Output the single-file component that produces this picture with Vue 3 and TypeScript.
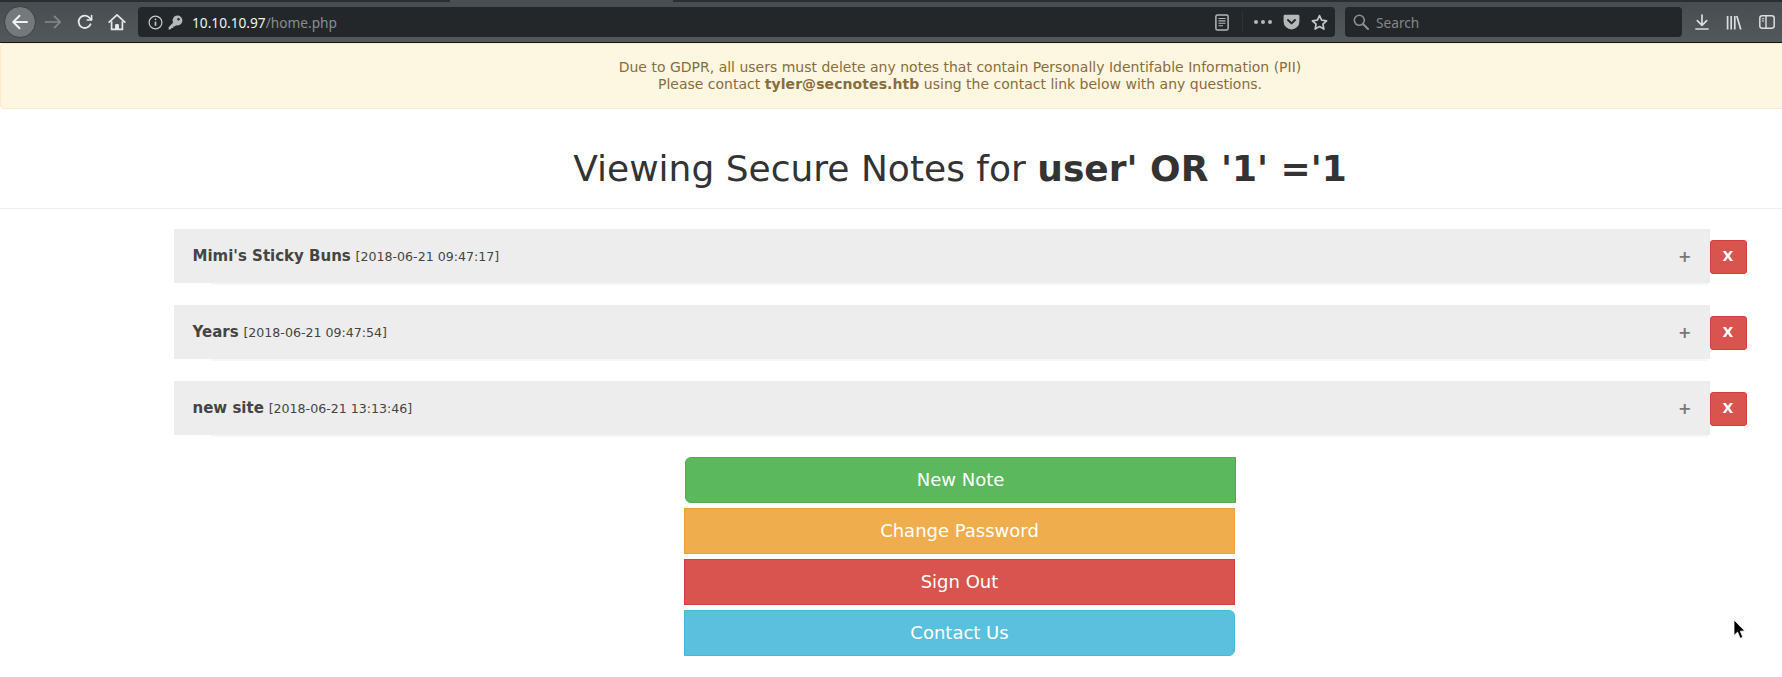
<script setup lang="ts">
const notes = [
  { title: "Mimi's Sticky Buns", date: '[2018-06-21 09:47:17]' },
  { title: 'Years', date: '[2018-06-21 09:47:54]' },
  { title: 'new site', date: '[2018-06-21 13:13:46]' },
];

const actions = [
  { label: 'New Note', cls: 'green' },
  { label: 'Change Password', cls: 'orange' },
  { label: 'Sign Out', cls: 'red' },
  { label: 'Contact Us', cls: 'blue' },
];
</script>

<template>
  <div class="shot">
    <div class="browser-bar">
      <div class="tab-strip">
        <div class="tab-active"></div>
      </div>
      <div class="toolbar">
        <div class="back-btn">
          <svg width="20" height="20" viewBox="0 0 20 20" fill="none" stroke="#f0f1f1" stroke-width="2" stroke-linecap="round" stroke-linejoin="round"><path d="M17 10H3.5M9.5 3.8 3.3 10l6.2 6.2" /></svg>
        </div>
        <div class="nav-icon fwd">
          <svg width="18" height="18" viewBox="0 0 18 18" fill="none" stroke="#85898b" stroke-width="1.7" stroke-linecap="round" stroke-linejoin="round"><path d="M1.5 9h14.500M10.500 3.300 16.200 9l-5.700 5.700" /></svg>
        </div>
        <div class="nav-icon reload">
          <svg width="16" height="16" viewBox="0 0 16 16" fill="none" stroke="#e8e9e9" stroke-width="1.8" stroke-linecap="round"><path d="M13.500 10.300A6.200 6.200 0 1 1 12.600 3.800L14.400 5.600" /><path d="M14.600 1.600v4.400h-4.400" stroke-linejoin="round" stroke-width="1.600" /></svg>
        </div>
        <div class="nav-icon home">
          <svg width="18" height="18" viewBox="0 0 18 18" fill="none" stroke="#e8e9e9" stroke-width="1.7" stroke-linejoin="round"><path d="M1.200 9.200 9 1.800l7.800 7.400" stroke-linecap="round" /><path d="M3.600 8.200v8.200h10.800V8.200" /><path d="M7.600 16.400v-4.800h2.800v4.800" fill="#e8e9e9" stroke-width="1" /></svg>
        </div>
        <div class="url-bar">
          <svg class="info" width="15" height="15" viewBox="0 0 15 15" fill="none" stroke="#c9caca" stroke-width="1.2"><circle cx="7.500" cy="7.500" r="6.400" /><path d="M7.500 6.600v4.200" stroke-width="1.600" /><circle cx="7.500" cy="4.300" r=".9" fill="#c9caca" stroke="none" /></svg>
          <svg class="key" width="15" height="15" viewBox="0 0 15 15" fill="#b5b7b8"><path d="M9.500.6a4.900 4.900 0 0 1 0 9.800c-.5 0-1-.1-1.400-.2L6.700 11.600H5.200v1.500H3.700L2.400 14.400H.6v-2.200L5 7.800A4.900 4.900 0 0 1 9.500.6Zm1 2.300a1.300 1.300 0 1 0 0 2.600 1.300 1.300 0 0 0 0-2.600Z" /></svg>
          <span class="url-text">10.10.10.97<span class="url-path">/home.php</span></span>
          <svg class="reader" width="14" height="17" viewBox="0 0 14 17" fill="none" stroke="#b5b7b8"><rect x=".9" y=".9" width="12.200" height="15.200" rx="1.600" stroke-width="1.500" /><path d="M3.500 4.500h7M3.500 6.900h7M3.500 9.300h7M3.500 11.700h4.500" stroke-width="1.100" /></svg>
          <div class="url-sep"></div>
          <div class="dots"><i></i><i></i><i></i></div>
          <svg class="pocket" width="17" height="16" viewBox="0 0 17 16"><path d="M2 .8h13c.8 0 1.400.6 1.400 1.400v5.300a7.900 7.900 0 0 1-15.800 0V2.200C.6 1.400 1.200.8 2 .8Z" fill="#b5b7b8" /><path d="m5 6 3.500 3.400L12 6" fill="none" stroke="#232729" stroke-width="2" stroke-linecap="round" stroke-linejoin="round" /></svg>
          <svg class="star" width="17" height="17" viewBox="0 0 17 17" fill="none" stroke="#c4c5c6" stroke-width="1.700" stroke-linejoin="round"><path d="m8.500 1.600 2.100 4.600 5 .6-3.700 3.400 1 4.900-4.400-2.500-4.400 2.500 1-4.900-3.700-3.400 5-.6Z" /></svg>
        </div>
        <div class="search-bar">
          <svg width="16" height="16" viewBox="0 0 16 16" fill="none" stroke="#8d9091" stroke-width="1.600" stroke-linecap="round"><circle cx="6.300" cy="6.300" r="5" /><path d="m10 10 5 5" stroke-width="2" /></svg>
          <span>Search</span>
        </div>
        <div class="right-icons">
          <svg width="14" height="16" viewBox="0 0 14 16" fill="none" stroke="#dcdddd" stroke-width="1.700" stroke-linecap="round" stroke-linejoin="round"><path d="M7 1v10M2.300 6.600 7 11.300l4.700-4.700M1 15h12" /></svg>
          <svg width="16" height="15" viewBox="0 0 16 15" fill="none" stroke="#dcdddd" stroke-width="1.700"><path d="M1.600 1v13.500M5.200 1v13.500M8.800 1v13.500M10.800 1l4 13.500" /></svg>
          <svg width="16" height="14" viewBox="0 0 16 14" fill="none" stroke="#dcdddd"><rect x=".8" y=".8" width="14.400" height="12.400" rx="2.400" stroke-width="1.500" /><path d="M7 1v12" stroke-width="1.400" /><path d="M2.800 3.800h2.400M2.800 6h2.400" stroke-width="1.100" /></svg>
        </div>
      </div>
    </div>

    <div class="page">
      <div class="alert">
        Due to GDPR, all users must delete any notes that contain Personally Identifable Information (PII)<br />
        Please contact <strong>tyler@secnotes.htb</strong> using the contact link below with any questions.
      </div>

      <h1 class="heading">Viewing Secure Notes for <strong>user' OR '1' ='1</strong></h1>

      <div class="notes">
        <div v-for="note in notes" :key="note.title" class="note-row">
          <div class="note">
            <div class="note-head">
              <span class="note-title"><strong>{{ note.title }}</strong> <small>{{ note.date }}</small></span>
              <span class="plus">+</span>
            </div>
          </div>
          <button class="del-btn">X</button>
        </div>
      </div>

      <div class="actions">
        <button v-for="a in actions" :key="a.label" class="act-btn" :class="a.cls">{{ a.label }}</button>
      </div>
    </div>

    <svg class="cursor" width="13" height="21" viewBox="0 0 13 21"><path d="M1 1v15.500l3.600-3.400 2.500 6.200 2.700-1.100-2.500-6 4.500-.2Z" fill="#000" stroke="#fff" stroke-width=".8" /></svg>
  </div>
</template>

<style>
html,
body {
  margin: 0;
  background: #fff;
  overflow: hidden;
}
</style>

<style scoped>
.shot {
  position: relative;
  width: 1782px;
  height: 677px;
  overflow: hidden;
  font-family: "DejaVu Sans", sans-serif;
  color: #333;
  background: #fff;
}

.browser-bar {
  height: 43px;
  background: linear-gradient(#474c50, #53585b);
  border-bottom: 1px solid #16181a;
  box-sizing: border-box;
}

.tab-strip {
  height: 2px;
  background: #2b2e31;
  display: flex;
}

.tab-active {
  margin-left: 450px;
  width: 223px;
  background: #4a4f52;
}

.toolbar {
  height: 40px;
  display: flex;
  align-items: center;
  padding-left: 4px;
}

.back-btn {
  width: 32px;
  height: 32px;
  box-sizing: border-box;
  border: 1px solid #3d4144;
  border-radius: 50%;
  background: #75797b;
  display: flex;
  align-items: center;
  justify-content: center;
}

.nav-icon {
  width: 32px;
  display: flex;
  justify-content: center;
}

.fwd {
  margin-left: 1px;
}

.url-bar {
  margin-left: 5px;
  width: 1197px;
  height: 30px;
  background: #232729;
  border-radius: 4px;
  display: flex;
  align-items: center;
  box-sizing: border-box;
  padding-left: 10px;
}

.key {
  margin-left: 5px;
}

.url-text {
  margin-left: 9px;
  font-family: "Noto Sans", sans-serif;
  font-size: 13.7px;
  color: #f1f2f2;
  flex: 1;
}

.url-path {
  color: #8a8d8f;
}

.url-sep {
  width: 1px;
  height: 20px;
  background: #2f3335;
  margin: 0 11px 0 13px;
}

.dots {
  display: flex;
  gap: 3px;
}

.dots i {
  width: 4px;
  height: 4px;
  border-radius: 50%;
  background: #b5b7b8;
}

.pocket {
  margin-left: 11px;
}

.star {
  margin: 0 7px 0 11px;
}

.search-bar {
  margin-left: 10px;
  width: 337px;
  height: 30px;
  background: #232729;
  border-radius: 4px;
  display: flex;
  align-items: center;
  gap: 7px;
  box-sizing: border-box;
  padding-left: 8px;
  font-family: "Noto Sans", sans-serif;
  font-size: 13.7px;
  color: #85888a;
}

.right-icons {
  margin-left: 13px;
  display: flex;
  align-items: center;
  gap: 17px;
}

.page {
  width: 1920px;
}

.alert {
  box-sizing: border-box;
  height: 66px;
  padding: 15px;
  background: #fdf7e2;
  border: 1px solid #faebcc;
  border-radius: 4px;
  text-align: center;
  font-size: 14px;
  line-height: 17px;
  color: #8a6d3b;
}

.alert strong {
  letter-spacing: 0.08px;
}

.heading {
  margin: 0;
  height: 100px;
  box-sizing: border-box;
  padding-top: 39px;
  text-align: center;
  font-size: 36px;
  line-height: 42px;
  font-weight: 400;
  border-bottom: 1px solid #eee;
}

.notes {
  width: 1573px;
  margin: 20px auto 0;
  display: flex;
  flex-direction: column;
  gap: 22px;
}

.note-row {
  display: flex;
  align-items: center;
}

.note {
  flex: 1;
  height: 54px;
}

/* faint line peeking out under each panel */
.note::after {
  content: "";
  display: block;
  height: 2px;
  margin: 0 2px 0 37px;
  background: #f7f7f7;
}

.note-head {
  height: 100%;
  display: flex;
  align-items: center;
  justify-content: space-between;
  padding: 0 18px 0 19px;
  background: #ededed;
  color: #444;
}

.note-title {
  font-size: 15px;
}

.note-title small {
  font-size: 12.6px;
}

.plus {
  font-size: 16px;
  font-weight: 700;
  color: #777;
}

.del-btn {
  width: 37px;
  height: 34px;
  margin-top: 2px;
  padding: 0 0 2px;
  border: 1px solid #d43f3a;
  border-radius: 3px;
  background: #d9534f;
  color: #fff;
  font-family: inherit;
  font-weight: 700;
  font-size: 14px;
}

.actions {
  margin-top: 22px;
  display: flex;
  flex-direction: column;
  align-items: center;
  gap: 5px;
}

.act-btn {
  width: 551px;
  height: 46px;
  border: 1px solid;
  margin-right: 1px;
  padding: 0 0 2px;
  color: #fff;
  font-family: inherit;
  font-size: 18px;
}

.green {
  background: #5cb85c;
  border-color: #4cae4c;
  border-radius: 6px 0 0 6px;
  margin: 0 0 0 1px;
}

.orange {
  background: #f0ad4e;
  border-color: #eea236;
}

.red {
  background: #d9534f;
  border-color: #d43f3a;
}

.blue {
  background: #5bc0de;
  border-color: #46b8da;
  border-radius: 0 6px 6px 0;
}

.cursor {
  position: absolute;
  left: 1733px;
  top: 619px;
}
</style>
